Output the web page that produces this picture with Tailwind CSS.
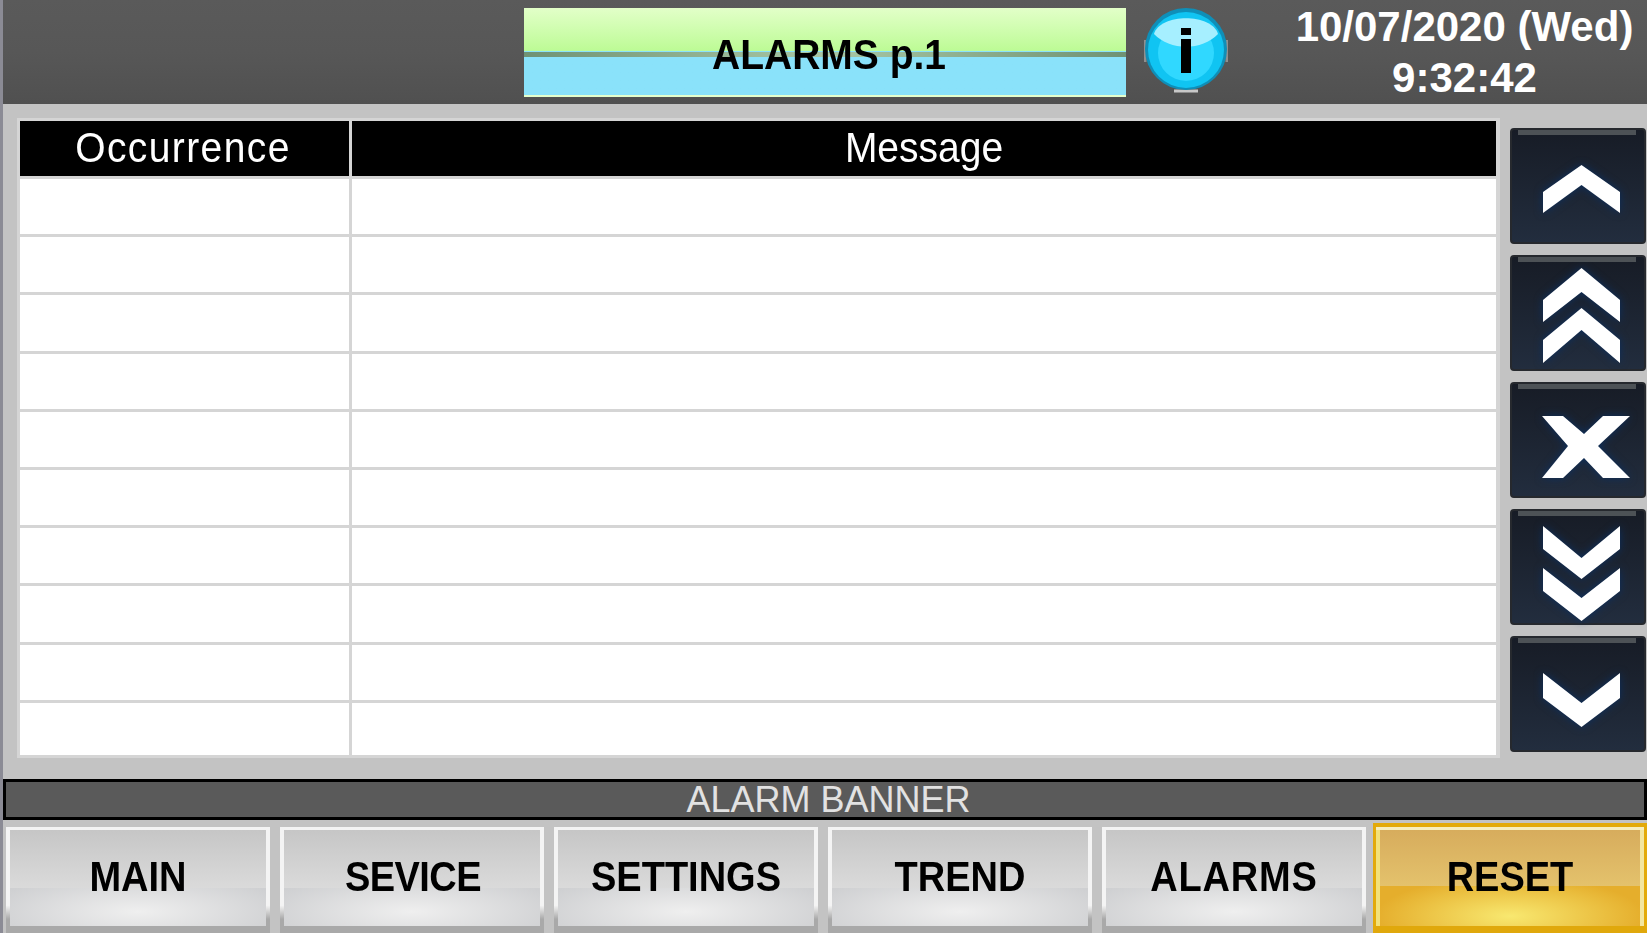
<!DOCTYPE html>
<html lang="en">
<head>
  <meta charset="UTF-8" />
  <title>Alarms</title>
  <script src="https://cdn.jsdelivr.net/npm/@tailwindcss/browser@4"></script>
</head>
<body class="bg-[#c3c3c3] font-['Liberation_Sans',sans-serif] overflow-hidden">
  <div class="w-[1647px] h-[933px] flex border-l-[3px] border-[#8b8b95]">
    <div class="flex-1 flex flex-col min-w-0">

      <!-- top bar -->
      <header class="h-[104px] bg-gradient-to-b from-[#5a5a5a] via-[#575757] to-[#505050] flex items-start shrink-0">
        <div class="ml-[521px] mt-[8px] w-[602px] h-[89px] relative flex items-center justify-center pl-[8px] bg-gradient-to-b from-[#e2ffc8] from-0% via-[#bcfb94] via-50% to-[#8ae2fa] to-50% border-b-2 border-white/10">
          <div class="absolute left-0 right-0 top-[44px] h-[5px] bg-gradient-to-r from-[#6f9274] via-[#a9c8a6] to-[#6f9274]"></div>
          <span class="relative inline-block text-[39px] font-bold text-black leading-none scale-y-[1.1] mt-[5px]">ALARMS p.1</span>
        </div>
        <svg class="ml-[18px] mt-[7px]" width="84" height="86" viewBox="0 0 84 86">
          <path d="M1 33 V55 M83 33 V55" stroke="#8f8f8f" stroke-width="3" fill="none" />
          <path d="M30 84 H54" stroke="#c8c8c8" stroke-width="3" fill="none" />
          <circle cx="42" cy="42" r="41" fill="#0f8fb8" />
          <circle cx="42" cy="43" r="38" fill="#10c4f2" />
          <circle cx="42" cy="46" r="28" fill="#30d8ff" />
          <path d="M10 27 C 16 6, 68 6, 74 27 C 58 44, 26 44, 10 27 Z" fill="#a6efff" />
          <rect x="37" y="21" width="10" height="7" fill="#000" />
          <rect x="37" y="32" width="10" height="34" fill="#000" />
        </svg>
        <div class="flex-1 pl-[54px] pt-[1px] text-white font-bold text-center text-[42px] leading-[51px] whitespace-nowrap">
          <div>10/07/2020 (Wed)</div>
          <div>9:32:42</div>
        </div>
      </header>

      <!-- table and scroll buttons -->
      <main class="flex h-[675px] shrink-0">
        <div class="ml-[14px] mt-[14px] w-[1483px] h-[640px] bg-[#d5d5d5] pl-[3px] pt-[3px] pr-[4px] pb-[3px] flex flex-col gap-[3px]">
          <div class="h-[55px] grid grid-cols-[329px_1fr] gap-[3px] text-white text-[39px] leading-[54px] text-center">
            <div class="bg-black pr-[3px]"><span class="inline-block scale-y-[1.1] tracking-[1.4px]">Occurrence</span></div>
            <div class="bg-black"><span class="inline-block scale-y-[1.1]">Message</span></div>
          </div>
          <div class="flex-1 grid grid-cols-[329px_1fr] grid-rows-[repeat(9,55.2px)_1fr] gap-[3px]">
            <div class="bg-white"></div><div class="bg-white"></div>
            <div class="bg-white"></div><div class="bg-white"></div>
            <div class="bg-white"></div><div class="bg-white"></div>
            <div class="bg-white"></div><div class="bg-white"></div>
            <div class="bg-white"></div><div class="bg-white"></div>
            <div class="bg-white"></div><div class="bg-white"></div>
            <div class="bg-white"></div><div class="bg-white"></div>
            <div class="bg-white"></div><div class="bg-white"></div>
            <div class="bg-white"></div><div class="bg-white"></div>
            <div class="bg-white"></div><div class="bg-white"></div>
          </div>
        </div>

        <div class="ml-[10px] mt-[24px] w-[136px] flex flex-col gap-[11px]">
          <button class="relative h-[116px] rounded-[4px] border-2 border-[#26292e] bg-gradient-to-b from-[#171c26] to-[#222d3e]">
            <span class="absolute left-[6px] right-[8px] top-0 h-[5px] bg-[#4d5256]"></span>
            <svg class="absolute -left-[2px] -top-[2px] drop-shadow-[0_0_4px_#0b2f60]" width="136" height="116" viewBox="0 0 136 116"><path d="M71.5 37 L110 64 V85 L71.5 57 L33 85 V64 Z" fill="#fff" /></svg>
          </button>
          <button class="relative h-[116px] rounded-[4px] border-2 border-[#26292e] bg-gradient-to-b from-[#171c26] to-[#222d3e]">
            <span class="absolute left-[6px] right-[8px] top-0 h-[5px] bg-[#4d5256]"></span>
            <svg class="absolute -left-[2px] -top-[2px] drop-shadow-[0_0_4px_#0b2f60]" width="136" height="116" viewBox="0 0 136 116"><path d="M71.5 13 L110 45 V67 L71.5 37 L33 67 V45 Z M71.5 53 L110 85 V108 L71.5 75 L33 108 V85 Z" fill="#fff" /></svg>
          </button>
          <button class="relative h-[116px] rounded-[4px] border-2 border-[#26292e] bg-gradient-to-b from-[#171c26] to-[#222d3e]">
            <span class="absolute left-[6px] right-[8px] top-0 h-[5px] bg-[#4d5256]"></span>
            <svg class="absolute -left-[2px] -top-[2px] drop-shadow-[0_0_4px_#0b2f60]" width="136" height="116" viewBox="0 0 136 116"><path d="M32 34 H53 L74 52 L93 34 H120 L88 64 L120 96 H93 L74 76 L53 96 H32 L58 64 Z" fill="#fff" /></svg>
          </button>
          <button class="relative h-[116px] rounded-[4px] border-2 border-[#26292e] bg-gradient-to-b from-[#171c26] to-[#222d3e]">
            <span class="absolute left-[6px] right-[8px] top-0 h-[5px] bg-[#4d5256]"></span>
            <svg class="absolute -left-[2px] -top-[2px] drop-shadow-[0_0_4px_#0b2f60]" width="136" height="116" viewBox="0 0 136 116"><path d="M33 17 L71.5 49 L110 17 V40 L71.5 70 L33 40 Z M33 59 L71.5 89 L110 59 V82 L71.5 112 L33 82 Z" fill="#fff" /></svg>
          </button>
          <button class="relative h-[116px] rounded-[4px] border-2 border-[#26292e] bg-gradient-to-b from-[#171c26] to-[#222d3e]">
            <span class="absolute left-[6px] right-[8px] top-0 h-[5px] bg-[#4d5256]"></span>
            <svg class="absolute -left-[2px] -top-[2px] drop-shadow-[0_0_4px_#0b2f60]" width="136" height="116" viewBox="0 0 136 116"><path d="M33 37 L71.5 67 L110 37 V62 L71.5 91 L33 62 Z" fill="#fff" /></svg>
          </button>
        </div>
      </main>

      <!-- alarm banner -->
      <div class="h-[41px] shrink-0 bg-[#5a5a5a] border-[3px] border-black flex items-center justify-center pl-[7px] text-[#e2e2e2] text-[36px] leading-none">ALARM BANNER</div>

      <!-- bottom nav -->
      <nav class="flex-1 flex items-end gap-[10px] pl-[3px] text-black font-bold text-[38px]">
        <button class="w-[264px] h-[106px] pb-[3px] border-x-[4px] border-t-[3px] border-b-[7px] [border-image:linear-gradient(#f4f4f4_78%,#a9a9a9_92%)_1] leading-none bg-[linear-gradient(#c6c6c6_0%,#dadada_60%,transparent_60%),radial-gradient(ellipse_60%_40%_at_50%_85%,#efefef,#cfd0d2)]"><span class="inline-block scale-y-[1.1]">MAIN</span></button>
        <button class="w-[264px] h-[106px] pb-[3px] pl-[2px] border-x-[4px] border-t-[3px] border-b-[7px] [border-image:linear-gradient(#f4f4f4_78%,#a9a9a9_92%)_1] leading-none bg-[linear-gradient(#c6c6c6_0%,#dadada_60%,transparent_60%),radial-gradient(ellipse_60%_40%_at_50%_85%,#efefef,#cfd0d2)]"><span class="inline-block scale-y-[1.1] tracking-[-0.6px]">SEVICE</span></button>
        <button class="w-[264px] h-[106px] pb-[3px] border-x-[4px] border-t-[3px] border-b-[7px] [border-image:linear-gradient(#f4f4f4_78%,#a9a9a9_92%)_1] leading-none bg-[linear-gradient(#c6c6c6_0%,#dadada_60%,transparent_60%),radial-gradient(ellipse_60%_40%_at_50%_85%,#efefef,#cfd0d2)]"><span class="inline-block scale-y-[1.1]">SETTINGS</span></button>
        <button class="w-[264px] h-[106px] pb-[3px] border-x-[4px] border-t-[3px] border-b-[7px] [border-image:linear-gradient(#f4f4f4_78%,#a9a9a9_92%)_1] leading-none bg-[linear-gradient(#c6c6c6_0%,#dadada_60%,transparent_60%),radial-gradient(ellipse_60%_40%_at_50%_85%,#efefef,#cfd0d2)]"><span class="inline-block scale-y-[1.1]">TREND</span></button>
        <button class="w-[264px] h-[106px] pb-[3px] border-x-[4px] border-t-[3px] border-b-[7px] [border-image:linear-gradient(#f4f4f4_78%,#a9a9a9_92%)_1] leading-none bg-[linear-gradient(#c6c6c6_0%,#dadada_60%,transparent_60%),radial-gradient(ellipse_60%_40%_at_50%_85%,#efefef,#cfd0d2)]"><span class="inline-block scale-y-[1.1] tracking-[0.8px]">ALARMS</span></button>
        <button class="-ml-[3px] w-[274px] h-[110px] border-x-[3px] border-t-[4px] border-b-[7px] border-x-[#e3aa0a] border-t-[#e3aa0a] border-b-[#e0a80c] shadow-[inset_0_3px_0_#f6eebf,inset_4px_0_0_#f3e27a,inset_-4px_0_0_#f3e6a0] leading-none bg-[linear-gradient(#d6ab5c_0%,#e4c26c_60%,transparent_60%),radial-gradient(ellipse_50%_40%_at_50%_90%,#f8e870,#e5ae2c)]"><span class="inline-block scale-y-[1.1]">RESET</span></button>
      </nav>
    </div>
  </div>
</body>
</html>
